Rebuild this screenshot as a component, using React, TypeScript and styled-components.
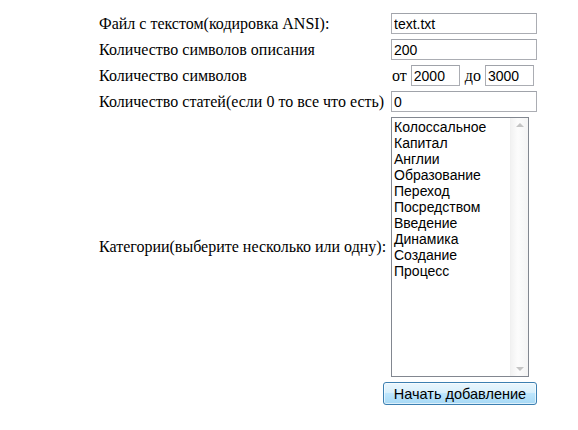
import styled, { createGlobalStyle } from 'styled-components';

const GlobalStyle = createGlobalStyle`
	html, body {
		margin: 0;
		padding: 0;
		background: #fff;
	}
`;

const Form = styled.form`
	display: grid;
	grid-template-columns: 290px 146px;
	column-gap: 2px;
	row-gap: 5px;
	padding: 13px 0 0 99px;
	font-family: 'Liberation Serif', 'Times New Roman', serif;
	font-size: 16px;
	color: #000;
`;

const Label = styled.label`
	align-self: center;
	white-space: nowrap;
	line-height: 18px;
`;

const Field = styled.div`
	display: flex;
	align-items: center;
	gap: 4px;
`;

const TextInput = styled.input<{ $width?: number }>`
	box-sizing: border-box;
	width: ${(p) => (p.$width ? `${p.$width}px` : '146px')};
	height: 21px;
	margin: 0;
	padding: 1px 2px 0;
	border: 1px solid #abadb3;
	border-top-color: #a0a3aa;
	font-family: 'Liberation Sans', Arial, sans-serif;
	font-size: 14px;
	color: #000;
	outline: none;
`;

const Word = styled.span`
	line-height: 18px;
	padding-left: 1px;
`;

const ListBox = styled.div`
	box-sizing: border-box;
	width: 138px;
	height: 260px;
	border: 1px solid #828790;
	display: flex;
	font-family: 'Liberation Sans', Arial, sans-serif;
	font-size: 14px;
`;

const Options = styled.ul`
	flex: 1;
	list-style: none;
	margin: 0;
	padding: 1px 0 0 2px;
`;

const Option = styled.li`
	line-height: 16px;
	white-space: nowrap;
`;

const ScrollBar = styled.div`
	width: 17px;
	display: flex;
	flex-direction: column;
	justify-content: space-between;
	align-items: center;
	padding: 5px 0;
	background: linear-gradient(to right, #f2f2f2, #fcfcfc 40%, #f4f4f4);
	border-left: 1px solid #f0f0f0;
`;

const Arrow = styled.span<{ $down?: boolean }>`
	width: 0;
	height: 0;
	border-left: 4px solid transparent;
	border-right: 4px solid transparent;
	${(p) =>
		p.$down
			? 'border-top: 4px solid #c4c4c4;'
			: 'border-bottom: 4px solid #c4c4c4;'}
`;

const Actions = styled.div`
	grid-column: 1 / span 2;
	display: flex;
	justify-content: flex-end;
`;

const SubmitButton = styled.button`
	box-sizing: border-box;
	width: 154px;
	height: 23px;
	margin: 0;
	padding: 0;
	border: 1px solid #3c7fb1;
	border-radius: 3px;
	background: linear-gradient(
		to bottom,
		#eaf6fd 0%,
		#d9f0fc 45%,
		#bee6fd 50%,
		#a7d9f5 100%
	);
	box-shadow: inset 0 0 0 1px rgba(255, 255, 255, 0.6);
	font-family: 'Liberation Sans', Arial, sans-serif;
	font-size: 14.5px;
	color: #000;
`;

const categories = [
	'Колоссальное',
	'Капитал',
	'Англии',
	'Образование',
	'Переход',
	'Посредством',
	'Введение',
	'Динамика',
	'Создание',
	'Процесс',
];

function App() {
	return (
		<>
			<GlobalStyle />
			<Form onSubmit={(e) => e.preventDefault()}>
				<Label>Файл с текстом(кодировка ANSI):</Label>
				<Field>
					<TextInput defaultValue="text.txt" />
				</Field>

				<Label>Количество символов описания</Label>
				<Field>
					<TextInput defaultValue="200" />
				</Field>

				<Label>Количество символов</Label>
				<Field>
					<Word>от</Word>
					<TextInput $width={49} defaultValue="2000" />
					<Word>до</Word>
					<TextInput $width={49} defaultValue="3000" />
				</Field>

				<Label>Количество статей(если 0 то все что есть)</Label>
				<Field>
					<TextInput defaultValue="0" />
				</Field>

				<Label>Категории(выберите несколько или одну):</Label>
				<Field>
					<ListBox>
						<Options>
							{categories.map((c) => (
								<Option key={c}>{c}</Option>
							))}
						</Options>
						<ScrollBar>
							<Arrow />
							<Arrow $down />
						</ScrollBar>
					</ListBox>
				</Field>

				<Actions>
					<SubmitButton type="submit">Начать добавление</SubmitButton>
				</Actions>
			</Form>
		</>
	);
}

export default App;
